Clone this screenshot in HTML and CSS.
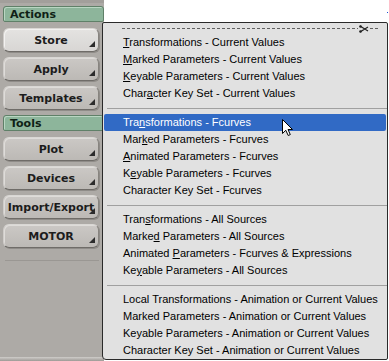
FILE: index.html
```html
<!DOCTYPE html>
<html>
<head>
<meta charset="utf-8">
<link rel="stylesheet" href="styles.css">
</head>
<body>
<div class="app">
  <aside class="sidebar">
    <div class="header">Actions</div>
    <div class="btn active">Store<span class="tri"></span></div>
    <div class="btn">Apply<span class="tri"></span></div>
    <div class="btn">Templates<span class="tri"></span></div>
    <div class="header">Tools</div>
    <div class="btn">Plot<span class="tri"></span></div>
    <div class="btn">Devices<span class="tri"></span></div>
    <div class="btn">Import/Export<span class="tri"></span></div>
    <div class="btn">MOTOR<span class="tri"></span></div>
    <div class="ghost"></div>
    <div class="bottom"></div>
  </aside>
  <main class="canvas"><span class="dot"></span></main>

  <div class="menu">
    <div class="tear">
      <span class="dash"></span>
      <svg class="scissors" width="10" height="8" viewBox="0 0 10 8">
        <path d="M1 1 L9 6 M1 7 L9 2" stroke="#222" stroke-width="1.2" fill="none"/>
        <circle cx="1.5" cy="1.5" r="1.3" fill="#222"/>
        <circle cx="1.5" cy="6.5" r="1.3" fill="#222"/>
      </svg>
      <span class="dash short"></span>
    </div>
    <div class="item"><u>T</u>ransformations - Current Values</div>
    <div class="item"><u>M</u>arked Parameters - Current Values</div>
    <div class="item"><u>K</u>eyable Parameters - Current Values</div>
    <div class="item">Char<u>a</u>cter Key Set - Current Values</div>
    <div class="sep"></div>
    <div class="item selected">Tra<u>n</u>sformations - Fcurves</div>
    <div class="item">Mar<u>k</u>ed Parameters - Fcurves</div>
    <div class="item"><u>A</u>nimated Parameters - Fcurves</div>
    <div class="item">K<u>e</u>yable Parameters - Fcurves</div>
    <div class="item">Character Key Set - Fcurves</div>
    <div class="sep"></div>
    <div class="item">Tran<u>s</u>formations - All Sources</div>
    <div class="item">Marke<u>d</u> Parameters - All Sources</div>
    <div class="item">Animated <u>P</u>arameters - Fcurves &amp; Expressions</div>
    <div class="item">Ke<u>y</u>able Parameters - All Sources</div>
    <div class="sep"></div>
    <div class="item">Local Transformations - Animation or Current Values</div>
    <div class="item">Marked Parameters - Animation or Current Values</div>
    <div class="item">Keyable Parameters - Animation or Current Values</div>
    <div class="item">Character Key Set - Animation or Current Values</div>
  </div>

  <svg class="cursor" width="13" height="19" viewBox="0 0 13 19">
    <path d="M0.5 0.5 L0.5 14.5 L3.8 11.3 L6.2 16.5 L8.3 15.6 L6 10.5 L10.5 10.5 Z" fill="#fff" stroke="#000" stroke-width="1" stroke-linejoin="miter"/>
  </svg>
</div>
</body>
</html>
```

FILE: styles.css
```css
* { box-sizing: border-box; }
html, body { margin: 0; padding: 0; }
body {
  width: 389px;
  height: 361px;
  overflow: hidden;
  background: #ffffff;
  font-family: "Liberation Sans", Arial, sans-serif;
}
.app {
  position: relative;
  display: flex;
  width: 389px;
  height: 361px;
}
.sidebar {
  width: 104px;
  flex: none;
  display: flex;
  flex-direction: column;
  background: #adaaa6;
  padding-top: 3px;
  border-top: 3px solid #a29f9b;
  font-family: "DejaVu Sans", Verdana, sans-serif;
}
.header {
  margin: 0 0 6px 3px;
  height: 16px;
  background: #8db59b;
  border: 1px solid #5f8068;
  border-radius: 3px 3px 2px 2px;
  box-shadow: inset 1px 1px 0 #b9d6c2;
  font-weight: bold;
  font-size: 11px;
  line-height: 15px;
  padding-left: 6px;
  color: #0f1f16;
}
.btn {
  position: relative;
  margin: 0 0 5px 3px;
  width: 96px;
  height: 24px;
  border-radius: 6px;
  background: linear-gradient(#cbc8c5, #bcb9b5);
  border: 1px solid;
  border-color: #d9d7d4 #87847f #6f6c68 #cfccc9;
  box-shadow: 1px 1px 0 #8f8c88, inset 1px 1px 0 #dedcd9;
  font-weight: bold;
  font-size: 11px;
  line-height: 23px;
  text-align: center;
  color: #1c1c1c;
  white-space: nowrap;
}
.btn.active {
  background: linear-gradient(#e4e3e1, #d8d6d4);
  box-shadow: 1px 1px 0 #8f8c88, inset 1px 1px 0 #f2f1f0;
}
.tri {
  position: absolute;
  right: 3px;
  bottom: 4px;
  width: 0;
  height: 0;
  border-left: 6px solid transparent;
  border-bottom: 6px solid #2c2c2c;
}
.ghost {
  margin: 7px 0 0 5px;
  width: 94px;
  height: 1px;
  background: #9a9793;
}
.bottom {
  margin-top: auto;
  height: 4px;
  background: linear-gradient(#cfcdca, #9d9a96);
}
.canvas {
  flex: 1;
  position: relative;
  background: #ffffff;
}
.dot {
  position: absolute;
  right: 1px;
  top: 12px;
  width: 1px;
  height: 1px;
  background: #2050d0;
}
.menu {
  position: absolute;
  left: 102px;
  top: 22px;
  width: 286px;
  height: 338px;
  background: #e1e1e1;
  border: 1px solid #2a2a2a;
  border-radius: 2px 2px 2px 4px;
  font-size: 11px;
  color: #000;
}
.tear {
  display: flex;
  align-items: center;
  height: 11px;
  padding: 0 8px 0 19px;
}
.dash {
  flex: 1;
  height: 1px;
  background: repeating-linear-gradient(90deg, #606060 0 3px, transparent 3px 5px);
}
.dash.short {
  flex: none;
  width: 9px;
}
.scissors {
  display: block;
  margin: 0 1px;
}
.item {
  height: 17px;
  line-height: 17px;
  margin: 0 1px;
  padding-left: 19px;
  white-space: nowrap;
  border-radius: 2px;
}
.item.selected {
  background: #316ac5;
  color: #ffffff;
}
.sep {
  margin: 6px 0 5px 4px;
  border-top: 1px solid #a0a0a0;
}
.cursor {
  position: absolute;
  left: 282px;
  top: 119px;
}
```
